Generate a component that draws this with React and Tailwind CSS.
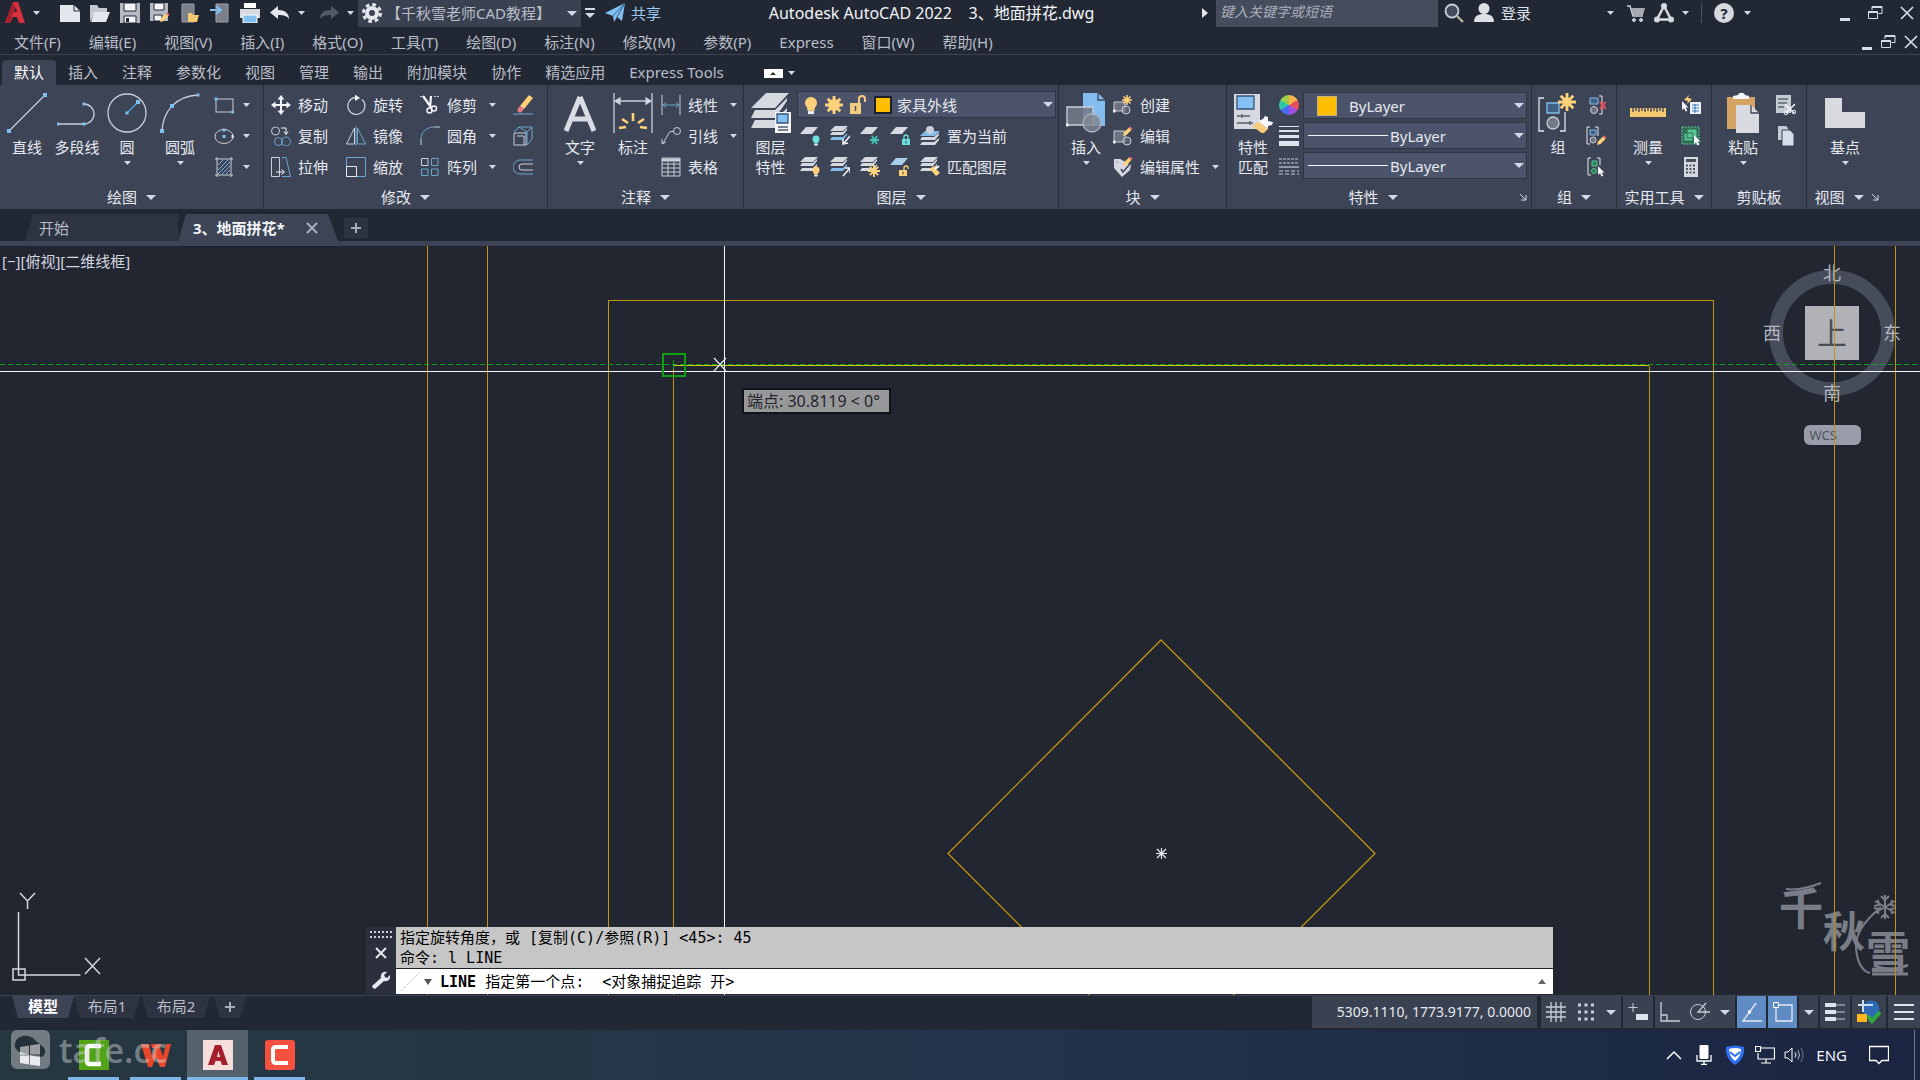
import React from "react";

const MENUS = [
  "文件(F)", "编辑(E)", "视图(V)", "插入(I)", "格式(O)", "工具(T)", "绘图(D)", "标注(N)",
  "修改(M)", "参数(P)", "Express", "窗口(W)", "帮助(H)",
];

const RIBBON_TABS = [
  "默认", "插入", "注释", "参数化", "视图", "管理", "输出", "附加模块", "协作", "精选应用", "Express Tools",
];

const Caret = ({ big, className = "" }) => (
  <svg
    className={`shrink-0 fill-[#d3d9e6] ${big ? "w-[10px] h-[5px]" : "w-[7px] h-1"} ${className}`}
    viewBox="0 0 10 5"
    preserveAspectRatio="none"
  >
    <path d="M0 0h10L5 5z" />
  </svg>
);

// 20x20 drawing used for all small icons
const Icon = ({ children, className = "w-5 h-5" }) => (
  <svg className={`shrink-0 ${className}`} viewBox="0 0 20 20" fill="none" stroke="#c9ced9" strokeWidth="1">
    {children}
  </svg>
);

// 40x40 drawing used for the large ribbon buttons
const BigIcon = ({ children }) => (
  <svg className="w-10 h-10 shrink-0" viewBox="0 0 40 40" fill="none" stroke="#c9ced9" strokeWidth="1.3">
    {children}
  </svg>
);

const Dot = ({ x, y, s = 4, c = "#7cc1f0" }) => (
  <rect x={x - s / 2} y={y - s / 2} width={s} height={s} fill={c} stroke="none" />
);

const Star = ({ x, y, r, c = "#ffd27a" }) => (
  <g stroke={c} strokeWidth={r / 3.2}>
    <circle cx={x} cy={y} r={r * 0.5} fill={c} stroke="none" />
    <path d={`M${x - r} ${y}h${2 * r}M${x} ${y - r}v${2 * r}M${x - r * 0.7} ${y - r * 0.7}l${r * 1.4} ${r * 1.4}M${x + r * 0.7} ${y - r * 0.7}l${-r * 1.4} ${r * 1.4}`} />
  </g>
);

const Pencil = ({ x, y }) => (
  <g stroke="none">
    <path d={`M${x} ${y + 9}l1-3.500 5-5 2.500 2.500-5 5z`} fill="#ffd27a" />
    <path d={`M${x + 6} ${y + 0.5}l1.200-1.200 2.500 2.500-1.200 1.200z`} fill="#e8606c" />
  </g>
);

const Pointer = ({ x, y }) => (
  <path d={`M${x} ${y}v9l2-1.800 1.600 3.300 1.700-.8-1.600-3.200h2.800z`} fill="#f2f4f8" stroke="none" />
);

const Sheet = ({ x, y, w = 12, c = "#d6d9e0" }) => (
  <path d={`M${x + w * 0.4} ${y}h${w * 0.7}l${-w * 0.4} ${w * 0.38}h${-w * 0.7}z`} fill={c} stroke="none" />
);

// three stacked layer sheets, the lowest one may carry an accent colour
const Sheets = ({ accent = "#d6d9e0" }) => (
  <g stroke="none" fill="#d6d9e0">
    <path d="M5 0h13l-5 5H0z" />
    <path d="M2 6h11l4-4v2l-4 5H0z" />
    <path d="M2 11h11l4-4v2l-4 5H0z" fill={accent} />
  </g>
);

const Bulb = ({ x, y, r = 3.5, c = "#ffd27a" }) => (
  <g stroke="none">
    <circle cx={x} cy={y} r={r} fill={c} />
    <path d={`M${x - r * 0.6} ${y + r * 0.6}h${r * 1.2}v${r * 0.7}h${-r * 1.2}z`} fill={c} />
    <rect x={x - r * 0.5} y={y + r * 1.35} width={r} height={r * 0.5} fill="#eef0f5" />
  </g>
);

const Lock = ({ x, y, open, c }) => (
  <g>
    <rect x={x} y={y + 4} width="8" height="6" fill={c} stroke="none" />
    <path d={open ? `M${x + 5} ${y + 4}v-2a2 2 0 0 1 4 0v1` : `M${x + 2} ${y + 4}v-2a2 2 0 0 1 4 0v2`} stroke={c} strokeWidth="1.300" />
    <path d={`M${x + 4} ${y + 5.5}v3`} stroke="#3d4455" />
  </g>
);

const icons = {
  rect: <><rect x="2" y="4" width="17" height="13" /><Dot x={2} y={4} s={3} /><Dot x={19} y={17} s={3} /></>,
  ellipse: <><ellipse cx="10" cy="10.500" rx="9" ry="7" /><Dot x={10} y={10.5} s={3} /><Dot x={10} y={4} s={3} /><Dot x={19} y={10.5} s={3} c="#c9ced9" /></>,
  hatch: <><path d="M3 0v20M17 0v20M1 2h18M1 18h18" /><path d="M4 8l5-5M4 13L14 3M4 17L16 5M8 17l8-8M12 17l4-4" stroke="#7cb4e0" /></>,
  move: <path d="M10 0l3.500 4.500H11v4.500h4.500V6.500L20 10l-4.500 3.500V11H11v4.500h2.500L10 20l-3.500-4.500H9V11H4.500v2.500L0 10l4.500-3.500V9H9V4.500H6.500z" fill="#f2f4f8" stroke="none" />,
  copy: <><circle cx="4.500" cy="5" r="4" /><circle cx="7.500" cy="15.500" r="4" stroke="#6ca7cf" /><circle cx="15" cy="15.500" r="4.500" stroke="#6ca7cf" /><path d="M10 2h5v6M13 5.500l2 3 2-3" stroke="#f2f4f8" /></>,
  stretch: <><path d="M.5 .5h8v19h-8z" /><path d="M11 .5h4l4.500 19H11" stroke="#6ca7cf" /><path d="M5 15h8M10.500 12.500l3 2.500-3 2.500" stroke="#f2f4f8" /></>,
  rotate: <><path d="M16 4.500A8.500 8.500 0 1 1 9 2.500" strokeWidth="1.300" /><path d="M9-.5l5 3.500-5 3z" fill="#f2f4f8" stroke="none" /></>,
  mirror: <><path d="M8.500 2v16H.5z" /><path d="M11.500 2v16h8z" stroke="#6ca7cf" /><path d="M10 0v20" stroke="#6ca7cf" /></>,
  scale: <><path d="M.5 .5h19v19H.5z" stroke="#6ca7cf" /><path d="M.5 9.500h10v10H.5z" stroke="#e6e9f0" /></>,
  trim: <><path d="M0 1.500h6M14 1.500h6" strokeDasharray="2 1" /><path d="M3 1l8.500 12M11 1l-1 12" stroke="#f2f4f8" strokeWidth="2.200" /><circle cx="9.500" cy="15.500" r="2.500" stroke="#f2f4f8" strokeWidth="1.500" /><circle cx="14" cy="13.500" r="2.500" stroke="#f2f4f8" strokeWidth="1.500" /></>,
  fillet: <><path d="M1 19v-6M14 1h6" /><path d="M1 13C1 6 7 1 14 1" stroke="#6ca7cf" /></>,
  array: <><path d="M1.500 1.500h6.500v7H1.500z" /><path d="M11.500 1.500H18v7h-6.500zM1.500 12H8v6.500H1.500zM11.500 12H18v6.500h-6.500z" stroke="#6ca7cf" /></>,
  erase: <><path d="M7 11L16 0l4 3-9 11z" fill="#ffd27a" stroke="none" /><path d="M7 11l4 3-2 2.500a2.500 2.500 0 0 1-4-3z" fill="#e87a86" stroke="none" /><path d="M0 19h20" stroke="#6ca7cf" /></>,
  explode: <><path d="M1 7h12v12H1zM4 10h7v9" /><path d="M1 6l5-5h13v12l-5 6M6 1l8 5 5-5M14 6v13" stroke="#6ca7cf" /></>,
  offset: <><path d="M20 3H7a7 7 0 0 0 0 14h13" stroke="#6ca7cf" /><path d="M20 7H9a3 3 0 0 0 0 6h11" /></>,
  linear: <><path d="M1 0v20M19 0v20" /><path d="M2 10h16M5 7.500L2 10l3 2.500M15 7.500l3 2.500-3 2.500" stroke="#6ca7cf" /></>,
  leader: <><circle cx="16" cy="5" r="3.500" /><path d="M13 5.500H9L2 17M1 13v5l4-2" /></>,
  table: <><path d="M1 1h18v18H1zM1 7h18M1 11h18M1 15h18M7 5v14M13 5v14" /><path d="M1 3h18" strokeWidth="3" /></>,
  layOff: <><path d="M6 1h12l-6 7H0z" fill="#d6d9e0" stroke="none" /><Bulb x={16} y={13} c="#6fe0e0" /></>,
  layIso: <><Sheets accent="#83bdea" /><path d="M20 10l-6 7M13 13v5l5-1" stroke="#f2f4f8" strokeWidth="1.500" /></>,
  layFreeze: <><path d="M6 1h12l-6 7H0z" fill="#d6d9e0" stroke="none" /><path d="M10 14h9M12 10l5 8M17 10l-5 8" stroke="#45c5b4" strokeWidth="1.800" /></>,
  layLock: <><path d="M6 1h12l-6 7H0z" fill="#d6d9e0" stroke="none" /><Lock x={12} y={9} c="#6fe0e0" /></>,
  layCurrent: <><path d="M5 5h15l-5 5H0z" fill="#83bdea" stroke="none" /><path d="M2 11h12l5-4v2l-4 5H0zM2 16h12l5-4v2l-4 5H0z" fill="#d6d9e0" stroke="none" /><circle cx="10" cy="4" r="4" fill="#c9ced9" stroke="none" /></>,
  layOn: <><Sheets /><Bulb x={16} y={13} /></>,
  layUniso: <><Sheets accent="#83bdea" /><path d="M13 19l6-7M15 11h5v5" stroke="#f2f4f8" strokeWidth="1.500" /></>,
  layThaw: <><Sheets /><Star x={14} y={14} r={6} /></>,
  layUnlock: <><path d="M6 1h12l-6 7H0z" fill="#a9cdec" stroke="none" /><Lock x={9} y={9} open c="#ffd27a" /></>,
  layMatch: <><Sheets /><path d="M10 12l3-3 7 7-4 3z" fill="#ffd27a" stroke="none" /><path d="M15 12l4-3" stroke="#fff" strokeWidth="2" /></>,
  blkNew: <><path d="M1 7h11v9H1z" fill="#6d7280" /><circle cx="13" cy="15" r="4" fill="#6d728099" /><Star x={14} y={5} r={5} /><Dot x={1} y={16} s={3} c="#f2f4f8" /></>,
  blkEdit: <><path d="M1 5h11v11H1z" fill="#6d7280" /><circle cx="14" cy="15" r="4" fill="#6d728099" /><Pencil x={10} y={1} /><Dot x={1} y={16} s={3} c="#f2f4f8" /></>,
  blkAttr: <><path d="M1 2h6l11 6-1 5-8 7-8-9z" fill="#d6d9e0" stroke="none" /><path d="M8 12l2 3 7-8" stroke="#3d4455" strokeWidth="1.500" /><circle cx="4" cy="5" r="1" fill="#3d4455" /><Pencil x={10} y={0} /></>,
  types: <><path d="M0 2h20M0 6h20" strokeDasharray="3 1" /><path d="M0 10h20" stroke="#e6e9f0" /><path d="M0 14h20M0 17h20" strokeDasharray="4 2" /></>,
  ungroup: <><path d="M13 1h3v18h-3" stroke="#e6e9f0" /><path d="M4 3h8v6H4z" fill="#3e6186" stroke="#83bdea" /><circle cx="8" cy="15" r="3.500" fill="#6d7280" /><path d="M14 7l6 7M20 7l-6 7" stroke="#e8505c" strokeWidth="2" /></>,
  groupEdit: <><path d="M4 1H1v17h3M9 1h3v9" stroke="#e6e9f0" /><path d="M4 4h6v5H4z" fill="#3e6186" stroke="#83bdea" /><circle cx="7" cy="14" r="3" fill="#6d7280" /><Pencil x={11} y={10} /></>,
  groupSel: <><path d="M5 1H2v17h3M11 1h3v7" stroke="#e6e9f0" /><path d="M6 4h5v5H6z" fill="#2f7d5b" stroke="#54c690" /><circle cx="8" cy="14" r="2.500" fill="#2f7d5b" stroke="#54c690" /><Pointer x={12} y={9} /></>,
  quickSel: <><path d="M9 7h11v12H9z" fill="#eef2fa" stroke="none" /><path d="M11 10h7M11 13h7M11 16h7M14 9v9" stroke="#3f79c4" /><path d="M8 0L3 5l4 1-1 3 5-5-4-1z" fill="#ffd27a" stroke="none" /><Pointer x={1} y={6} /></>,
  selAll: <><path d="M1 1h17v17H1z" fill="#2f6b56" stroke="#54c690" strokeDasharray="2 1" /><path d="M6 3h10v9H6zM3 7h9v8H3z" fill="#54c690" stroke="#2f6b56" /><Pointer x={13} y={9} /></>,
  calc: <><path d="M3 0h14v20H3z" fill="#d6d9e0" stroke="none" /><path d="M5 2h10v3H5z" fill="#4a5163" stroke="none" /><path d="M5 8.500h10M5 12h10M5 15.500h10" stroke="#4a5163" strokeWidth="2" strokeDasharray="2 1.500" /></>,
  cut: <><path d="M0 0h15v18H0z" fill="#c6cad2" stroke="none" /><path d="M2 4h10M2 8h9M2 12h6" stroke="#5a6172" strokeWidth="1.500" /><path d="M9 9l9 9M19 9l-9 9" stroke="#f2f4f8" strokeWidth="1.500" /><circle cx="10" cy="18" r="1.800" stroke="#f2f4f8" /><circle cx="18" cy="17" r="1.800" stroke="#f2f4f8" /></>,
  copyClip: <><path d="M2 0h8l2 2v12H2z" fill="#c6cad2" stroke="none" /><path d="M6 4h8l4 4v12H6z" fill="#d5dcea" stroke="#3d4455" /></>,
};

const big = {
  line: <><path d="M2 38L38 2" /><Dot x={2} y={38} /><Dot x={38} y={2} /></>,
  polyline: <><path d="M1 31h26a10 10 0 0 0 0-20" /><Dot x={1} y={31} s={3} /><Dot x={27} y={31} s={3} /><Dot x={27} y={11} s={3} /></>,
  circle: <><circle cx="20" cy="20" r="19" /><path d="M20 20L31 9" stroke="#4da3e0" /><Dot x={20} y={20} s={3} /><Dot x={31} y={9} /></>,
  arc: <><path d="M2 38C3 18 16 3 38 2" /><Dot x={2} y={38} /><Dot x={12} y={13} /><Dot x={38} y={2} s={3} /></>,
  text: <path d="M20 4L6 38M20 4l14 34M11 26h18" stroke="#d9dce4" strokeWidth="5" />,
  dim: <><path d="M1 0v40M39 0v40M2 8h36" /><path d="M7 5L2 8l5 3zM33 5l5 3-5 3z" fill="#d9dce4" /><path d="M6 35l7-1M9 26l6 4M20 20v8M31 26l-6 4M34 35l-7-1" stroke="#ffd27a" strokeWidth="2.600" /></>,
  layers: <><g stroke="none" fill="#d6d9e0"><path d="M15 0h23L24 15H0z" /><path d="M4 17h20l12-12v3L24 25H0z" /><path d="M4 27h20l12-12v3L24 35H0z" /></g><path d="M24 19h16v21H24z" fill="#f3f5f9" stroke="none" /><path d="M26 21h11v9H26z" fill="#83c1f2" stroke="#33527a" /><path d="M27 34h10M27 37h10" stroke="#555c6c" /></>,
  insert: <><path d="M17 0h15l7 7v26H17z" fill="#83bdf0" stroke="none" /><path d="M32 0v7h7" stroke="#3d4455" /><path d="M1 14h26v18H1z" fill="#747987dd" /><circle cx="26" cy="30" r="9" fill="#7f8491cc" stroke="#aeb3be" /><Dot x={1} y={32} s={3} c="#f2f4f8" /></>,
  match: <><path d="M1 1h26v35H1z" fill="#d6d9e0" stroke="none" /><path d="M4 3h17v13H4z" fill="#83c1f2" stroke="#33527a" /><path d="M4 23h13M4 30h16M9 21v4M17 28v4" stroke="#555c6c" /><path d="M19 33l7-5 9 8-5 5z" fill="#f5cb7d" stroke="none" /><path d="M25 28l5-2 2-3 3 1v4l5 1-1 3-4 1v3z" fill="#f6f7fa" stroke="none" /></>,
  group: <><path d="M6 5H1v33h5M22 38h5V19" stroke="#dfe3ec" /><path d="M9 10h12v10H9z" fill="#3e6186" stroke="#83bdea" /><circle cx="15" cy="30" r="6" fill="#747987" /><Star x={29} y={9} r={9} /></>,
  ruler: <><path d="M2 15h36v9H2z" fill="#f5c96f" stroke="none" /><path d="M5 15v4M8 15v3M11 15v4M14 15v3M17 15v4M20 15v3M23 15v4M26 15v3M29 15v4M32 15v3M35 15v4" stroke="#3d4455" /></>,
  paste: <><path d="M4 4h28v32H4z" fill="#d6a462" stroke="none" /><path d="M10 6V3l5-1c1-3 6-3 7 0l4 1v3z" fill="#f2f4f8" stroke="none" /><path d="M13 12h15l8 8v21H13z" fill="#d9dbe0" stroke="none" /><path d="M28 12v8h8" stroke="#3d4455" /></>,
  base: <path d="M0 5h17v14h23v16H0z" fill="#d9dbe0" stroke="none" />,
};

const BigButton = ({ icon, label, label2, width, caret }) => (
  <button className={`flex flex-col items-center shrink-0 pt-1 ${width}`}>
    <BigIcon>{big[icon]}</BigIcon>
    <span className="pt-1 leading-5 whitespace-nowrap">{label}</span>
    {label2 && <span className="leading-5 whitespace-nowrap">{label2}</span>}
    {caret && <Caret className="mt-1" />}
  </button>
);

const SmallButton = ({ icon, label, caret }) => (
  <button className="flex items-center h-[31px] whitespace-nowrap" aria-label={label || icon}>
    <Icon>{icons[icon]}</Icon>
    {label && <span className="ml-[7px]">{label}</span>}
    {caret && <Caret className={label ? "ml-3" : "ml-[9px]"} />}
  </button>
);

const Panel = ({ title, width, noCaret, launcher, children }) => (
  <section className={`flex flex-col shrink-0 border-r last:border-r-0 border-[#262c38] ${width}`}>
    <div className="flex pt-1 h-[100px]">{children}</div>
    <div className={`relative flex items-center justify-center gap-[9px] h-6 ${launcher ? "pr-3" : ""}`}>
      <span>{title}</span>
      {!noCaret && <Caret big />}
      {launcher && (
        <svg className="absolute right-1 w-2 h-2" viewBox="0 0 8 8" stroke="#d3d9e6" fill="none">
          <path d="M1 1l6 6M7 2v5H2" />
        </svg>
      )}
    </div>
  </section>
);

const RestoreGlyph = () => (
  <svg className="w-4 h-4" viewBox="0 0 16 16" fill="none" stroke="#d8dde8">
    <path d="M5 5V1.500h10v7h-3.500" />
    <path d="M5 2h10" strokeWidth="2" />
    <path d="M1.500 6.500h9v7h-9z" />
    <path d="M1.500 7h9" strokeWidth="2" />
  </svg>
);

const WindowButtons = ({ gap }) => (
  <div className={`flex items-center ${gap}`}>
    <button aria-label="最小化" className="h-4 flex items-end"><span className="block w-[10px] h-[3px] bg-[#d8dde8]" /></button>
    <button aria-label="还原"><RestoreGlyph /></button>
    <button aria-label="关闭">
      <svg className="w-[14px] h-[14px]" viewBox="0 0 14 14" stroke="#d8dde8" strokeWidth="1.600"><path d="M1 1l12 12M13 1L1 13" /></svg>
    </button>
  </div>
);

const TitleBar = () => (
  <header className="flex items-center h-7 pb-0.5">
    <button aria-label="应用程序" className="flex items-center gap-2 ml-[5px]">
      <svg className="w-5 h-6" viewBox="0 0 20 24"><path d="M0 22L8 1h5l7 21h-6l-2-6H8l-3 6zM9 11h3l-1.500-5z" fill="#d8303d" /><path d="M0 22L8 1l2 5-5 16z" fill="#a81f2c" /></svg>
      <Caret />
    </button>
    <div className="flex items-center gap-[10px] ml-5">
      <button aria-label="新建"><Icon><path d="M0 2h14l6 6v11H0z" fill="#e4e7ed" stroke="none" /><path d="M14 2v6h6" stroke="#222833" /></Icon></button>
      <button aria-label="打开"><Icon><path d="M0 19V2h7l2 3h8v4H5z" fill="#c3c7d0" stroke="none" /><path d="M4 9h16l-4 10H1z" fill="#e4e7ed" stroke="none" /></Icon></button>
      <button aria-label="保存"><Icon><path d="M0 0h20v20H0z" fill="#b5b9c2" stroke="none" /><path d="M4 0h12v8H4zM4 13h12v7H4z" fill="#f4f5f8" stroke="#222833" /><path d="M6 15h3v4H6z" fill="#222833" stroke="none" /></Icon></button>
      <button aria-label="另存为"><Icon><path d="M0 0h18v18H0z" fill="#b5b9c2" stroke="none" /><path d="M4 0h10v7H4zM4 12h8v6H4z" fill="#f4f5f8" stroke="#222833" /><Pencil x={10} y={10} /></Icon></button>
      <button aria-label="从移动设备打开"><Icon><path d="M2 1h12v18H2z" fill="#7b7f89" stroke="#9da1aa" /><path d="M8 10h4l1 2h6l-2 7H8z" fill="#f5c96f" stroke="none" /></Icon></button>
      <button aria-label="保存到移动设备"><Icon><path d="M6 1h12v18H6z" fill="#7b7f89" stroke="#9da1aa" /><path d="M0 7h9M6 3l5 4-5 4" stroke="#83c1f2" strokeWidth="2" /></Icon></button>
      <button aria-label="打印"><Icon><path d="M4 0h12v5H4z" fill="#fff" stroke="none" /><path d="M0 6h20v9H0z" fill="#d6d9e0" stroke="none" /><path d="M3 12h14v8H3z" fill="#83c1f2" stroke="#fff" /></Icon></button>
    </div>
    <div className="flex items-center ml-[10px] gap-2">
      <button aria-label="放弃"><Icon><path d="M8 3v4c8 0 11 4 11 9-2-3-5-4-11-4v4L0 9.500z" fill="#e4e7ed" stroke="none" /></Icon></button>
      <Caret />
      <button aria-label="重做" className="ml-1.5"><Icon><path d="M12 3v4C4 7 1 11 1 16c2-3 5-4 11-4v4l8-6.500z" fill="#525967" stroke="none" /></Icon></button>
      <Caret />
    </div>
    <div className="relative flex items-center h-7 w-[223px] bg-[#3a4150] ml-1 pl-1">
      <svg className="w-5 h-5" viewBox="0 0 20 20" fill="none" stroke="#e4e7ed">
        <circle cx="10" cy="10" r="5" strokeWidth="4" />
        <circle cx="10" cy="10" r="8.500" strokeWidth="3" strokeDasharray="3.700 2.980" />
      </svg>
      <select aria-label="工作空间" className="flex-1 appearance-none bg-transparent text-[#b9bec9] outline-none pl-1 pr-4">
        <option>【千秋雪老师CAD教程】</option>
      </select>
      <Caret big className="absolute right-1 pointer-events-none" />
    </div>
    <button aria-label="自定义快速访问工具栏" className="flex flex-col items-center gap-[3px] ml-1">
      <span className="block w-[10px] h-0.5 bg-[#d3d9e6]" />
      <Caret big />
    </button>
    <button className="flex items-center gap-1.5 ml-[10px] text-[#9ccbf3]">
      <Icon><path d="M0 10L20 0l-3 18-5-4-3 5-1-6z" fill="#83c1f2" stroke="none" /><path d="M8 13L20 0l-8 14" stroke="#2c5f8d" /></Icon>
      共享
    </button>
    <h1 className="flex-1 text-center text-[#f2f4f8] whitespace-pre text-base leading-6">Autodesk AutoCAD 2022    3、地面拼花.dwg</h1>
    <svg className="w-1.5 h-[10px]" viewBox="0 0 6 10"><path d="M0 0l6 5-6 5z" fill="#e4e7ed" /></svg>
    <input
      aria-label="搜索"
      placeholder="键入关键字或短语"
      className="w-[222px] h-7 ml-2 pl-1 pb-1 bg-[#454c5c] italic text-sm outline-none placeholder:text-[#a9aeba]"
    />
    <button aria-label="搜索按钮" className="ml-1.5"><Icon><circle cx="8" cy="8" r="6.500" strokeWidth="1.800" fill="#454c5c" /><path d="M13 13l6 6" strokeWidth="2.200" stroke="#b8b9a2" /></Icon></button>
    <button className="flex items-center gap-[7px] ml-[10px] text-[#dfe3ec]">
      <Icon><g fill="#dfe1e6" stroke="none"><circle cx="10" cy="5.500" r="5.500" /><path d="M0 19c0-6 4-8 10-8s10 2 10 8z" /></g></Icon>
      登录
      <Caret className="ml-[69px]" />
    </button>
    <button aria-label="购物车" className="ml-3"><Icon><path d="M1 3h3l3 10h10" strokeWidth="1.500" /><path d="M5 5h14l-2 7H7z" fill="#a5a9b3" stroke="none" /><circle cx="8" cy="17" r="1.500" fill="#c9ced9" /><circle cx="15" cy="17" r="1.500" fill="#c9ced9" /></Icon></button>
    <button aria-label="Autodesk App Store" className="flex items-center gap-2 ml-2">
      <Icon><path d="M10 3L3 16.500h14z" stroke="#d6d9e0" strokeWidth="2.500" /><g fill="#d6d9e0" stroke="none"><circle cx="10" cy="3" r="3" /><circle cx="3" cy="16.500" r="3" /><circle cx="17" cy="16.500" r="3" /></g></Icon>
      <Caret />
    </button>
    <span className="w-px h-5 bg-[#4a5060] mx-3" />
    <button aria-label="帮助" className="flex items-center gap-[10px]">
      <span className="flex items-center justify-center w-5 h-5 rounded-full bg-[#d6d9e0] text-[#222833] font-bold leading-5">?</span>
      <Caret />
    </button>
    <div className="ml-[89px] mr-1.5"><WindowButtons gap="gap-[17px]" /></div>
  </header>
);

const MenuBar = () => (
  <nav className="flex items-center h-[27px] pt-0.5 border-b border-[#3b4250] text-[#b9bec9]">
    {MENUS.map((m) => (
      <button key={m} className="px-[14px] whitespace-nowrap">{m}</button>
    ))}
    <div className="ml-auto mr-0.5"><WindowButtons gap="gap-2" /></div>
  </nav>
);

const RibbonTabs = () => (
  <nav className="flex items-end h-[30px] pl-0.5 text-[#b9bec9]">
    {RIBBON_TABS.map((t, i) => (
      <button
        key={t}
        className={`h-[25px] px-3 pb-0.5 whitespace-nowrap rounded-t-sm ${i === 0 ? "bg-[#3d4455] text-white" : ""}`}
      >
        {t}
      </button>
    ))}
    <button aria-label="最小化功能区" className="flex items-center gap-[5px] h-6 ml-7">
      <span className="flex items-center justify-center w-[19px] h-[9px] bg-white">
        <svg className="w-1.5 h-[3px]" viewBox="0 0 6 3"><path d="M0 3l3-3 3 3z" fill="#333" /></svg>
      </span>
      <Caret />
    </button>
  </nav>
);

const Combo = ({ label, value, width, children }) => (
  <div className={`relative flex items-center h-[27px] bg-[#4b546a] border border-[#2f3543] ${width}`}>
    {children}
    <select aria-label={label} className="flex-1 min-w-0 appearance-none bg-transparent outline-none pr-5">
      <option>{value}</option>
    </select>
    <Caret big className="absolute right-0.5 pointer-events-none" />
  </div>
);

const Ribbon = () => (
  <div className="flex h-[124px] bg-[#3d4455] text-[#e6e9f0]">
    <Panel title="绘图" width="w-[264px]">
      <BigButton icon="line" label="直线" width="w-[54px]" />
      <BigButton icon="polyline" label="多段线" width="w-[46px]" />
      <BigButton icon="circle" label="圆" width="w-[54px]" caret />
      <BigButton icon="arc" label="圆弧" width="w-[52px]" caret />
      <div className="pl-2">
        <SmallButton icon="rect" caret />
        <SmallButton icon="ellipse" caret />
        <SmallButton icon="hatch" caret />
      </div>
    </Panel>

    <Panel title="修改" width="w-[284px]">
      <div className="w-[75px] ml-[7px]">
        <SmallButton icon="move" label="移动" />
        <SmallButton icon="copy" label="复制" />
        <SmallButton icon="stretch" label="拉伸" />
      </div>
      <div className="w-[74px]">
        <SmallButton icon="rotate" label="旋转" />
        <SmallButton icon="mirror" label="镜像" />
        <SmallButton icon="scale" label="缩放" />
      </div>
      <div className="w-[93px]">
        <SmallButton icon="trim" label="修剪" caret />
        <SmallButton icon="fillet" label="圆角" caret />
        <SmallButton icon="array" label="阵列" caret />
      </div>
      <div>
        <SmallButton icon="erase" />
        <SmallButton icon="explode" />
        <SmallButton icon="offset" />
      </div>
    </Panel>

    <Panel title="注释" width="w-[196px]">
      <BigButton icon="text" label="文字" width="w-[64px]" caret />
      <BigButton icon="dim" label="标注" width="w-[42px]" />
      <div className="ml-[7px]">
        <SmallButton icon="linear" label="线性" caret />
        <SmallButton icon="leader" label="引线" caret />
        <SmallButton icon="table" label="表格" />
      </div>
    </Panel>

    <Panel title="图层" width="w-[315px]">
      <BigButton icon="layers" label="图层" label2="特性" width="w-[53px]" />
      <div className="flex-1 pr-0.5">
        <div className="flex items-center h-[31px]">
          <Combo label="图层列表" value="家具外线" width="w-full">
            <div className="flex items-center gap-[3px] pl-[3px] pr-0.5">
              <Icon><Bulb x={10} y={8} r={6} /></Icon>
              <Icon><Star x={10} y={10} r={9} /><circle cx="10" cy="10" r="6" fill="#ffd27a" stroke="none" /></Icon>
              <Icon><path d="M3 8h11v11H3z" fill="#f5cb7d" stroke="none" /><path d="M12 8V4a3 3 0 0 1 6 0v3" stroke="#f5cb7d" strokeWidth="2" /><path d="M8.500 11v5" stroke="#4b546a" strokeWidth="1.500" /></Icon>
              <span className="block w-[18px] h-[18px] ml-1 mr-[3px] bg-[#ffbf00] border-2 border-[#1c2029]" />
            </div>
          </Combo>
        </div>
        <div className="flex items-center gap-[10px] pl-[3px]">
          <SmallButton icon="layOff" />
          <SmallButton icon="layIso" />
          <SmallButton icon="layFreeze" />
          <SmallButton icon="layLock" />
          <SmallButton icon="layCurrent" label="置为当前" />
        </div>
        <div className="flex items-center gap-[10px] pl-[3px]">
          <SmallButton icon="layOn" />
          <SmallButton icon="layUniso" />
          <SmallButton icon="layThaw" />
          <SmallButton icon="layUnlock" />
          <SmallButton icon="layMatch" label="匹配图层" />
        </div>
      </div>
    </Panel>

    <Panel title="块" width="w-[168px]">
      <BigButton icon="insert" label="插入" width="w-[54px]" caret />
      <div>
        <SmallButton icon="blkNew" label="创建" />
        <SmallButton icon="blkEdit" label="编辑" />
        <SmallButton icon="blkAttr" label="编辑属性" caret />
      </div>
    </Panel>

    <Panel title="特性" width="w-[305px]" launcher>
      <BigButton icon="match" label="特性" label2="匹配" width="w-[52px]" />
      <div className="w-6">
        <div className="flex items-center h-[31px]">
          <span className="block w-5 h-5 rounded-full bg-[conic-gradient(#ffb347_0deg_60deg,#e8505c_60deg_120deg,#a050e0_120deg_180deg,#4a6cf0_180deg_240deg,#2ec8a8_240deg_300deg,#9ad14b_300deg_360deg)]" />
        </div>
        <div className="flex items-center h-[31px]">
          <div className="flex flex-col gap-[3px] w-5">
            <span className="h-px bg-[#dfe3ec]" />
            <span className="h-0.5 bg-[#dfe3ec]" />
            <span className="h-[3px] bg-[#dfe3ec]" />
            <span className="h-[5px] bg-[#dfe3ec]" />
          </div>
        </div>
        <SmallButton icon="types" />
      </div>
      <div className="flex flex-col gap-[3px] pt-[3px]">
        <Combo label="颜色" value="ByLayer" width="w-[224px]">
          <span className="block w-5 h-5 ml-[13px] mr-3 bg-[#ffbf00] border border-[#c9b27a]" />
        </Combo>
        <Combo label="线宽" value="ByLayer" width="w-[224px]">
          <span className="block w-20 h-px ml-1 mr-0.5 bg-[#f2f4f8]" />
        </Combo>
        <Combo label="线型" value="ByLayer" width="w-[224px]">
          <span className="block w-20 h-px ml-1 mr-0.5 bg-[#f2f4f8]" />
        </Combo>
      </div>
    </Panel>

    <Panel title="组" width="w-[85px]">
      <BigButton icon="group" label="组" width="w-[52px]" />
      <div className="ml-0.5">
        <SmallButton icon="ungroup" />
        <SmallButton icon="groupEdit" />
        <SmallButton icon="groupSel" />
      </div>
    </Panel>

    <Panel title="实用工具" width="w-[95px]">
      <BigButton icon="ruler" label="测量" width="w-[62px]" caret />
      <div className="ml-0.5">
        <SmallButton icon="quickSel" />
        <SmallButton icon="selAll" />
        <SmallButton icon="calc" />
      </div>
    </Panel>

    <Panel title="剪贴板" width="w-[95px]" noCaret>
      <BigButton icon="paste" label="粘贴" width="w-[62px]" caret />
      <div className="ml-0.5">
        <SmallButton icon="cut" />
        <SmallButton icon="copyClip" />
      </div>
    </Panel>

    <Panel title="视图" width="w-[76px]" launcher>
      <BigButton icon="base" label="基点" width="w-[76px]" caret />
    </Panel>
  </div>
);

const DocTabs = () => (
  <div>
    <div className="flex items-end h-8 pl-[25px]">
      <button className="w-[153px] h-[27px] pl-[14px] text-left text-[#b9bec9] bg-[#2d3341] [clip-path:polygon(8px_0,100%_0,100%_100%,0_100%)]">开始</button>
      <div className="flex items-center w-[160px] h-[27px] pl-[15px] bg-[#3d4455] [clip-path:polygon(8px_0,150px_0,100%_100%,0_100%)]">
        <button className="font-bold text-[#f2f4f8]">3、地面拼花*</button>
        <button aria-label="关闭图形" className="ml-auto mr-5">
          <svg className="w-3 h-3" viewBox="0 0 12 12" stroke="#a9aeba" strokeWidth="2"><path d="M1 1l10 10M11 1L1 11" /></svg>
        </button>
      </div>
      <button aria-label="新图形" className="flex items-center justify-center w-6 h-5 ml-1.5 mb-[3px] bg-[#2d3341]">
        <svg className="w-[10px] h-[10px]" viewBox="0 0 10 10" stroke="#a9aeba" strokeWidth="2"><path d="M5 0v10M0 5h10" /></svg>
      </button>
    </div>
    <div className="h-[5px] bg-[#3d4455]" />
  </div>
);

const ViewCube = () => (
  <div className="absolute right-4 top-[15px] flex flex-col items-center text-lg leading-6 text-[#b4b8c0]">
    <svg className="absolute w-36 h-36" viewBox="0 0 144 144">
      <circle cx="72" cy="72" r="56" fill="none" stroke="#474c5a" strokeWidth="14" />
    </svg>
    <div className="relative flex flex-col items-center justify-between w-36 h-36">
      <span>北</span>
      <div className="flex items-center justify-between w-full">
        <span className="w-6 text-center">西</span>
        <button className="w-[54px] h-[54px] bg-[#b0b2b8] text-[#4a4d58] text-3xl">上</button>
        <span className="w-6 text-center">东</span>
      </div>
      <span>南</span>
    </div>
    <button className="flex items-center w-[57px] h-5 mt-5 pl-1.5 rounded-md bg-[#9a9da9] text-[#4f5361] text-[13px]">WCS</button>
  </div>
);

const Watermark = () => (
  <svg className="absolute right-[10px] bottom-3 w-[130px] h-[110px] overflow-visible opacity-45 fill-[#e6e8f0] font-bold [font-family:'Noto_Sans_CJK_SC',sans-serif]" viewBox="0 0 130 110">
    <text x="-1" y="52" fontSize="44">千</text>
    <text x="43" y="74" fontSize="42">秋</text>
    <text x="86" y="96" fontSize="44">雪</text>
    <path d="M6 16q14 2 35-6" fill="none" stroke="#e6e8f0" strokeWidth="2" />
    <path d="M101 34C82 50 76 62 76 72c0 14 5 26 14 28" fill="none" stroke="#e6e8f0" strokeWidth="2" />
    <path d="M92 101h36M94 92q16 8 34 0" fill="none" stroke="#e6e8f0" strokeWidth="3" />
    <g stroke="#e6e8f0" strokeWidth="2" fill="none" transform="translate(105 34)">
      <path d="M0-12v24M-10-6l20 12M-10 6l20-12M-4-11l4 4 4-4M-4 11l4-4 4 4M-11-1l5-1-1-5M11 1l-5 1 1 5M-11 1l5 1-1 5M11-1l-5-1 1-5" />
    </g>
  </svg>
);

const Drawing = () => (
  <svg className="absolute inset-0 w-full h-full pointer-events-none" fill="none" shapeRendering="crispEdges">
    <g stroke="#bf9410">
      <path d="M427.500 0v2000M487.500 0v2000M1834.500 0v2000M1895.500 0v2000" />
      <path d="M608.500 2000V54.500h1105V2000" />
      <path d="M673.500 2000V119.500M1649.500 119.500V2000" />
      <path d="M1161 394l214 213.500L1161 821 948 607.500z" shapeRendering="auto" strokeWidth="1.300" />
    </g>
    <line x1="0" y1="118.500" x2="100%" y2="118.500" stroke="#12a018" strokeDasharray="5 3" />
    <path d="M674 119.500h975" stroke="#d2ce14" />
    <g stroke="#f2f4f8">
      <line x1="0" y1="125.500" x2="100%" y2="125.500" />
      <line x1="724.500" y1="0" x2="724.500" y2="100%" />
    </g>
    <g shapeRendering="auto">
      <path d="M714 112l12 13M726 112l-12 13M1156 607.500h11M1161.500 602v11M1157 603l9 9M1166 603l-9 9" stroke="#e6e9f0" strokeWidth="1.200" />
      <path d="M663 108h22v22h-22z" stroke="#0fa012" strokeWidth="2" />
      <path d="M673.500 114v9" stroke="#0fa012" />
    </g>
  </svg>
);

const UcsIcon = () => (
  <svg className="absolute left-0 bottom-0 w-28 h-28" viewBox="0 0 112 112" fill="none" stroke="#d3d7e0" strokeWidth="1.500">
    <path d="M18.500 29v63h62M13 86h12v11H13z" />
    <path d="M20 10l7.500 8L35 10M27.500 18v8M85 75l15 16M100 75L85 91" />
  </svg>
);

const CommandLine = () => (
  <div className="absolute left-[366px] right-[367px] bottom-[1px] flex h-[67px] text-[15px] text-black [font-family:'DejaVu_Sans_Mono','Noto_Sans_CJK_SC',monospace]">
    <div className="flex flex-col items-center w-[30px] pt-1 bg-[#2b303c]">
      <svg className="w-[22px] h-2" viewBox="0 0 22 8" stroke="#c9ced9" strokeWidth="2" strokeDasharray="2 2"><path d="M0 1h22M0 6h22" /></svg>
      <button aria-label="关闭命令行" className="mt-2">
        <svg className="w-3 h-3" viewBox="0 0 12 12" stroke="#e6e9f0" strokeWidth="2"><path d="M1 1l10 10M11 1L1 11" /></svg>
      </button>
      <button aria-label="自定义" className="mt-3">
        <svg className="w-[18px] h-[18px]" viewBox="0 0 18 18"><path d="M1 17l-1-2 9-8c-1-4 2-7 6-6l-3 3 1 2 2 1 3-3c1 4-2 7-6 6l-9 8z" fill="#e6e9f0" /></svg>
      </button>
    </div>
    <div className="flex-1 flex flex-col">
      <div className="flex-1 pl-1 pt-px bg-[#c6c6c6] leading-5 whitespace-pre">
        <p>指定旋转角度，或 [复制(C)/参照(R)] &lt;45&gt;: 45</p>
        <p>命令: l LINE</p>
      </div>
      <div className="flex items-center h-[26px] pl-1 pr-[7px] bg-white border-t border-[#1c2029]">
        <svg className="w-5 h-5" viewBox="0 0 20 20" stroke="#b9cbe6"><path d="M1 19L19 1" strokeDasharray="3 1" /></svg>
        <svg className="w-2 h-1.5 ml-1 mr-2" viewBox="0 0 8 6"><path d="M0 0h8L4 6z" fill="#555" /></svg>
        <label htmlFor="cmd" className="whitespace-pre"><b>LINE</b> 指定第一个点:  &lt;对象捕捉追踪 开&gt;</label>
        <input id="cmd" className="flex-1 min-w-0 outline-none" />
        <svg className="w-2 h-[5px]" viewBox="0 0 8 5"><path d="M0 5h8L4 0z" fill="#666" /></svg>
      </div>
    </div>
  </div>
);

const Canvas = () => (
  <main className="relative flex-1 min-h-[500px] overflow-hidden bg-[#222631]">
    <p className="pt-[3px] pl-0.5 text-[#d3d7e0] leading-6">[−][俯视][二维线框]</p>
    <ViewCube />
    <Watermark />
    <Drawing />
    <UcsIcon />
    <div className="absolute left-[742px] top-[142px] px-[3px] h-[26px] w-[149px] border-2 border-[#11141a] bg-[#98989a] text-[#23252b] text-base leading-[22px] whitespace-nowrap">
      端点: 30.8119 &lt; 0°
    </div>
    <CommandLine />
  </main>
);

const StatusCell = ({ width, active, label, children }) => (
  <button aria-label={label} className={`flex items-center justify-center h-8 ${width} ${active ? "bg-[#5f8cc4]" : "bg-[#3a4150]"}`}>
    {children}
  </button>
);

const StatusBar = () => (
  <div className="flex items-start h-[35px] bg-[#222833] border-t border-[#3d4455] text-[#b9bec9]">
    <button className="w-[62px] h-[22px] pb-0.5 ml-3 bg-[#3d4455] text-white font-bold [clip-path:polygon(0_0,100%_0,56px_100%,6px_100%)]">模型</button>
    <button className="w-[66px] h-[22px] pb-0.5 bg-[#2d3341] [clip-path:polygon(0_0,100%_0,60px_100%,6px_100%)]">布局1</button>
    <button className="w-[68px] h-[22px] pb-0.5 ml-0.5 bg-[#2d3341] [clip-path:polygon(0_0,100%_0,62px_100%,6px_100%)]">布局2</button>
    <button aria-label="新建布局" className="flex items-center justify-center w-8 h-[22px] ml-1 bg-[#2d3341] [clip-path:polygon(0_0,100%_0,26px_100%,6px_100%)]">
      <svg className="w-[10px] h-[10px]" viewBox="0 0 10 10" stroke="#a9aeba" strokeWidth="2"><path d="M5 0v10M0 5h10" /></svg>
    </button>
    <div className="flex items-center ml-auto gap-0.5">
      <span className="flex items-center justify-end w-[225px] h-8 pr-1.5 bg-[#3a4150] text-[#e6e9f0] text-sm">5309.1110, 1773.9177, 0.0000</span>
      <div className="flex ml-0.5">
        <StatusCell width="w-[30px]" label="栅格"><Icon><path d="M5 0v20M10 0v20M15 0v20M0 5h20M0 10h20M0 15h20" strokeWidth="1.300" /></Icon></StatusCell>
        <StatusCell width="w-[30px]" label="捕捉模式"><Icon><path d="M2 3h16M2 10h16M2 17h16" strokeWidth="3" strokeDasharray="3 3.500" /></Icon></StatusCell>
        <StatusCell width="w-[20px]" label="捕捉设置"><Caret big /></StatusCell>
      </div>
      <StatusCell width="w-[30px]" label="动态输入"><Icon><path d="M5 1v9M.5 5.500h9" /><path d="M8 12h12v6H8z" fill="#dfe3ec" stroke="none" /></Icon></StatusCell>
      <div className="flex">
        <StatusCell width="w-[30px]" label="正交模式"><Icon><path d="M1 0v19h19M1 13h6v6" strokeWidth="1.300" /></Icon></StatusCell>
        <StatusCell width="w-[30px]" label="极轴追踪"><Icon><circle cx="8" cy="10" r="7.500" /><path d="M20 10H8l8-9" strokeWidth="1.300" /></Icon></StatusCell>
        <StatusCell width="w-[20px]" label="极轴设置"><Caret big /></StatusCell>
      </div>
      <StatusCell width="w-[29px]" label="对象捕捉追踪" active><Icon><path d="M20 19H1L14 1" strokeWidth="1.300" stroke="#e6e9f0" /><Dot x={7.5} y={10} s={3} c="#fff" /></Icon></StatusCell>
      <StatusCell width="w-[29px]" label="对象捕捉" active><Icon><path d="M3 3h16v16H3z" stroke="#e6e9f0" strokeWidth="1.300" /><path d="M.500 .500h5v5h-5z" fill="#5f8cc4" stroke="#fff" /></Icon></StatusCell>
      <StatusCell width="w-[19px]" label="捕捉选项"><Caret big /></StatusCell>
      <StatusCell width="w-[30px]" label="线宽"><Icon><path d="M0 3h20M0 10h20M0 17h20" /><path d="M0 3h11M0 10h11M0 17h11" strokeWidth="4" stroke="#dfe3ec" /></Icon></StatusCell>
      <StatusCell width="w-[34px]" label="注释监视器">
        <svg className="w-6 h-6" viewBox="0 0 24 24">
          <circle cx="14" cy="9" r="8.500" fill="#2d6cb5" />
          <path d="M1 5h15M6 0v12" stroke="#c9e0f7" strokeWidth="2" />
          <path d="M0 14h10v8H0z" fill="#ffb81c" />
          <path d="M11 16l4 5 8-9" stroke="#2fa843" strokeWidth="4" fill="none" />
        </svg>
      </StatusCell>
      <StatusCell width="w-8" label="自定义"><Icon><path d="M0 3h20M0 10h20M0 17h20" strokeWidth="2.200" stroke="#dfe3ec" /></Icon></StatusCell>
    </div>
  </div>
);

const TaskIcon = ({ label, active, width = "w-[51px]", children }) => (
  <button aria-label={label} className={`flex flex-col items-center justify-between h-full pt-[10px] ${width} ${active ? "bg-[#54626c]" : ""}`}>
    <svg className="w-[30px] h-[30px]" viewBox="0 0 30 30">{children}</svg>
    <span className="block w-full h-[3px] bg-[#7fb4e8]" />
  </button>
);

const Taskbar = () => (
  <footer className="relative flex items-center h-[50px] bg-linear-to-r from-[#263740] via-[#22354a] to-[#1b2542]">
    <button aria-label="开始" className="w-[60px] flex justify-center">
      <svg className="w-5 h-[22px]" viewBox="0 0 20 22" fill="#fff"><path d="M0 3l9-1.500v9H0zM10 1.300L20 0v10.500H10zM0 11.500h9v9L0 19zM10 11.500h10V22l-10-1.300z" /></svg>
    </button>
    <div className="flex items-center h-full gap-[11px] ml-2">
      <TaskIcon label="Camtasia">
        <rect width="30" height="30" fill="#53a318" />
        <path d="M22 6H11q-3 0-3 3v12q0 3 3 3h11" fill="none" stroke="#fff" strokeWidth="4.500" />
      </TaskIcon>
      <TaskIcon label="WPS">
        <path d="M0 4h8l3 12 3-8h-3l-1-4h10l-1 4 3 8 3-12h5l-6 23h-5l-4-10-4 10H7z" fill="#e8462b" />
      </TaskIcon>
    </div>
    <div className="flex items-center h-full gap-1.5 ml-1.5">
      <TaskIcon label="AutoCAD" active width="w-[61px]">
        <rect width="30" height="30" fill="#f6dedd" />
        <path d="M5 25L12 5h6l7 20h-6l-1.500-4h-5L11 25zM14 17h3l-1.500-6z" fill="#a3202c" />
      </TaskIcon>
      <TaskIcon label="Camtasia 录制">
        <rect width="30" height="30" rx="3" fill="#f4503f" />
        <path d="M23 7H11q-3 0-3 3v10q0 3 3 3h12" fill="none" stroke="#fff" strokeWidth="4" />
      </TaskIcon>
    </div>

    <div className="absolute left-[11px] top-0 flex items-center gap-[9px] opacity-45 pointer-events-none">
      <svg className="w-[39px] h-[39px]" viewBox="0 0 39 39"><rect width="39" height="39" rx="6" fill="#cfd2d4" /><path d="M4 13c2-9 15-9 19-4s13 8 11 14-8 4-14 2S2 23 4 13z" fill="#232a30" /></svg>
      <span className="text-[34px] leading-9 font-semibold text-[#d3d6d8] [font-family:'Open_Sans','Noto_Sans',sans-serif]">tafe.cc</span>
    </div>

    <div className="flex items-center ml-auto h-full text-[#f2f4f8]">
      <button aria-label="显示隐藏的图标"><svg className="w-4 h-[10px]" viewBox="0 0 16 10" fill="none" stroke="#fff" strokeWidth="1.500"><path d="M1 9l7-7 7 7" /></svg></button>
      <button aria-label="麦克风" className="ml-3"><Icon><rect x="5.500" y="0" width="9" height="14" rx="1" fill="#fff" stroke="none" /><path d="M3 10v6h14v-6M10 16v4M7 19.500h6" stroke="#fff" strokeWidth="1.300" /></Icon></button>
      <button aria-label="安全中心" className="ml-[11px]"><Icon><path d="M1 2c6-2 12-2 18 0 1 8-3 14-9 18C4 16 0 10 1 2z" fill="#2f6df2" stroke="none" /><path d="M4 4c4-1.500 8-1.500 12 0 0 5-2 9-6 12C6 13 4 9 4 4z" fill="#fff" stroke="none" /><path d="M5 7l5 4 5-4" stroke="#2f6df2" strokeWidth="2" /></Icon></button>
      <button aria-label="网络" className="ml-[10px]"><Icon><path d="M6 3h13.500v11H3V8M.500 1.500h5v5h-5zM11 14v4M6 18h10" stroke="#fff" strokeWidth="1.200" /></Icon></button>
      <button aria-label="音量" className="ml-[9px]"><Icon><path d="M1 7h3l4-4v14l-4-4H1z" stroke="#fff" /><path d="M11 7.500q2 2.500 0 5" stroke="#fff" /><path d="M14 5.500q3 4.500 0 9" stroke="#b9bec9" /><path d="M17 3q4 7 0 14" stroke="#6b748a" /></Icon></button>
      <span className="ml-3">ENG</span>
      <button aria-label="通知" className="ml-[22px]"><Icon><path d="M.500 1.500h19v14H13l-3 3-3-3H.500z" stroke="#fff" strokeWidth="1.300" /></Icon></button>
      <span className="w-px h-full ml-[25px] mr-[5px] bg-[#6b748a]" />
    </div>
  </footer>
);

const App = () => {
  return (
    <div className="flex flex-col min-h-screen overflow-x-hidden bg-[#222833] text-[15px] leading-5 [font-family:'Noto_Sans','Noto_Sans_CJK_SC',sans-serif]">
      <TitleBar />
      <MenuBar />
      <RibbonTabs />
      <Ribbon />
      <DocTabs />
      <Canvas />
      <StatusBar />
      <Taskbar />
    </div>
  );
};

export default App;
